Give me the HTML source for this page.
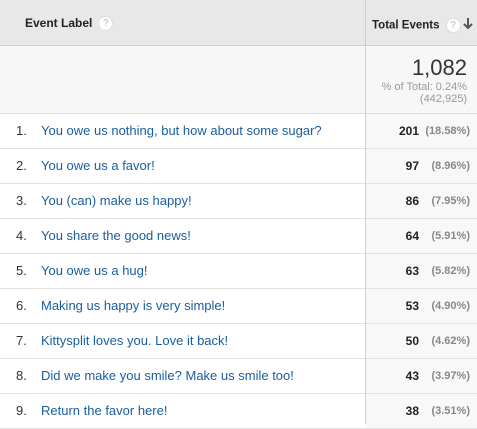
<!DOCTYPE html>
<html><head><style>
*{margin:0;padding:0;box-sizing:border-box}
body{width:477px;height:424px;overflow:hidden;background:#fff;font-family:"Liberation Sans",Arial,sans-serif;position:relative}
.hdr{position:absolute;left:0;top:0;width:477px;height:46px;background:#e8e8e8;border-bottom:1px solid #cfcfcf}
.vl{position:absolute;left:365px;top:0;width:1px;height:424px;background:#cfcfcf}
.q{display:inline-block;width:15px;height:15px;border-radius:8px;background:#fff;border:1px solid #ddd;color:#ccc;font-size:10px;text-align:center;line-height:13px;vertical-align:middle;margin-left:6px}
.sum{position:absolute;left:0;top:46px;width:477px;height:68px;background:#f7f7f7;border-bottom:1px solid #ddd}
.row{position:absolute;left:0;width:477px;height:35px;border-bottom:1px solid #e2e2e2;font-size:13px}
.row .n{position:absolute;left:16px;top:9px;color:#333}
.row .t{position:absolute;left:41px;top:9px;color:#1a5ea0}
.row .r{position:absolute;left:366px;top:0;width:111px;height:34px;background:#f8f8f8}
.row .v{position:absolute;right:58px;top:10px;font-weight:bold;color:#222;font-size:12px}
.row .p{position:absolute;right:7px;top:11px;font-weight:bold;color:#888;font-size:11px}
</style></head><body>
<div class="hdr">
<div style="position:absolute;left:25px;top:16px;font-size:12px;font-weight:bold;color:#222">Event Label<span class="q">?</span></div>
<div style="position:absolute;left:372px;top:18px;font-size:11.5px;font-weight:bold;color:#222">Total Events<span class="q">?</span></div>
<svg style="position:absolute;left:463px;top:18px" width="10" height="12" viewBox="0 0 10 12"><path d="M5 0V10M1 6L5 10L9 6" stroke="#555" stroke-width="2" fill="none"/></svg>
</div>
<div class="sum">
<div style="position:absolute;right:10px;top:9px;font-size:22px;color:#333">1,082</div>
<div style="position:absolute;right:10px;top:35px;font-size:11px;color:#999;text-align:right;line-height:12px">% of Total: 0.24%<br>(442,925)</div>
</div>
<div class="row" style="top:114px"><span class="n">1.</span><span class="t">You owe us nothing, but how about some sugar?</span><div class="r"><span class="v">201</span><span class="p">(18.58%)</span></div></div>
<div class="row" style="top:149px"><span class="n">2.</span><span class="t">You owe us a favor!</span><div class="r"><span class="v">97</span><span class="p">(8.96%)</span></div></div>
<div class="row" style="top:184px"><span class="n">3.</span><span class="t">You (can) make us happy!</span><div class="r"><span class="v">86</span><span class="p">(7.95%)</span></div></div>
<div class="row" style="top:219px"><span class="n">4.</span><span class="t">You share the good news!</span><div class="r"><span class="v">64</span><span class="p">(5.91%)</span></div></div>
<div class="row" style="top:254px"><span class="n">5.</span><span class="t">You owe us a hug!</span><div class="r"><span class="v">63</span><span class="p">(5.82%)</span></div></div>
<div class="row" style="top:289px"><span class="n">6.</span><span class="t">Making us happy is very simple!</span><div class="r"><span class="v">53</span><span class="p">(4.90%)</span></div></div>
<div class="row" style="top:324px"><span class="n">7.</span><span class="t">Kittysplit loves you. Love it back!</span><div class="r"><span class="v">50</span><span class="p">(4.62%)</span></div></div>
<div class="row" style="top:359px"><span class="n">8.</span><span class="t">Did we make you smile? Make us smile too!</span><div class="r"><span class="v">43</span><span class="p">(3.97%)</span></div></div>
<div class="row" style="top:394px"><span class="n">9.</span><span class="t">Return the favor here!</span><div class="r"><span class="v">38</span><span class="p">(3.51%)</span></div></div>
<div class="vl"></div>
</body></html>
